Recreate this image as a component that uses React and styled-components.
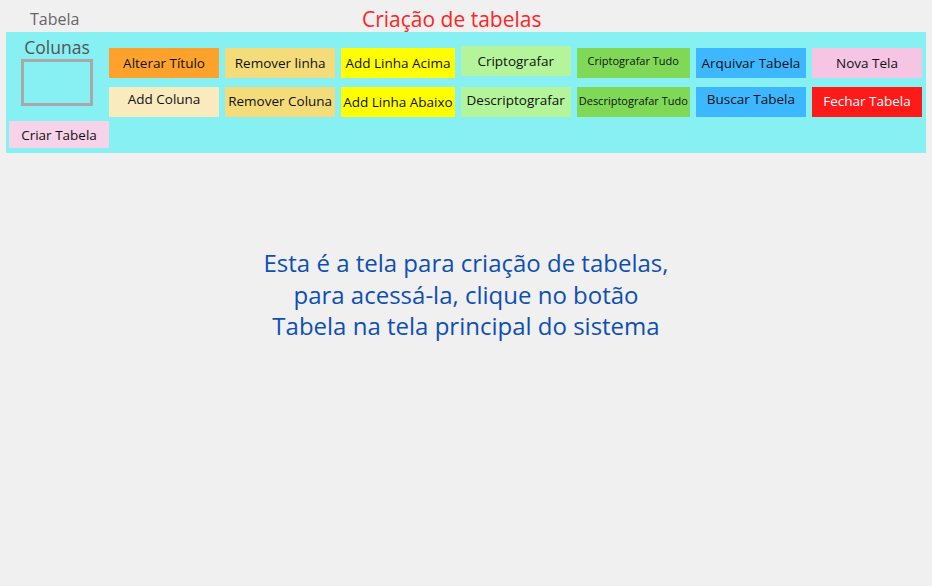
import React from 'react'
import styled, { createGlobalStyle } from 'styled-components'

const GlobalStyle = createGlobalStyle`
  body {
    margin: 0;
    background: #f0f0f0;
    font-family: "Open Sans", "Liberation Sans", sans-serif;
  }
`

const Page = styled.div`
  width: 932px;
  height: 586px;
  background: #f0f0f0;
`

const Header = styled.div`
  display: flex;
  align-items: flex-start;
  height: 32px;
  padding-top: 7px;
  box-sizing: border-box;
`

const Label = styled.span`
  flex: 0 0 362px;
  padding: 1px 0 0 30px;
  box-sizing: border-box;
  font-size: 16px;
  line-height: 22px;
  color: #666666;
`

const Title = styled.h1`
  margin: -2px 0 0;
  font-size: 21px;
  line-height: 28px;
  font-weight: 400;
  color: #ff2424;
`

const Panel = styled.section`
  margin: 0 6px;
  padding: 16px 4px 5px 3px;
  background: #87f0f3;
  display: flex;
  flex-direction: column;
  gap: 4px;
`

const TopRow = styled.div`
  display: flex;
`

const ColumnsBox = styled.div`
  width: 100px;
  padding-right: 4px;
  box-sizing: border-box;
  display: flex;
  flex-direction: column;
  align-items: center;
  margin-top: -11px;
`

const ColumnsLabel = styled.span`
  font-size: 17.5px;
  line-height: 20px;
  color: #555555;
`

const ColumnsInput = styled.div`
  width: 72px;
  height: 47px;
  margin-top: 2px;
  border: 3px solid #a8a8a8;
  box-sizing: border-box;
`

const ButtonGrid = styled.div`
  flex: 1;
  display: grid;
  grid-template-columns: repeat(7, 1fr);
  grid-auto-rows: 30px;
  column-gap: 6px;
  row-gap: 9px;
`

const Button = styled.button`
  border: none;
  margin: 0;
  margin-top: ${p => (p.$up ? `-${p.$up}px` : '0')};
  height: 30px;
  padding: 0 2px ${p => p.$lift || 0}px;
  background: ${p => p.$bg};
  color: ${p => p.$color || '#111111'};
  font-family: "Open Sans", "Liberation Sans", sans-serif;
  font-size: ${p => p.$size || 13.5}px;
  white-space: nowrap;
  display: flex;
  align-items: center;
  justify-content: center;
  cursor: pointer;
`

const CreateButton = styled(Button)`
  width: 100px;
  height: 27px;
`

const Message = styled.p`
  margin: 94px 0 0;
  text-align: center;
  font-size: 24px;
  line-height: 31.5px;
  color: #0f4fb3;
`

const buttons = [
  { label: 'Alterar Título', bg: '#ffa22b' },
  { label: 'Remover linha', bg: '#f5dc7b' },
  { label: 'Add Linha Acima', bg: '#ffff00' },
  { label: 'Criptografar', bg: '#b4f59b', up: 2 },
  { label: 'Criptografar Tudo', bg: '#7fd957', size: 11, lift: 6 },
  { label: 'Arquivar Tabela', bg: '#3db7ff' },
  { label: 'Nova Tela', bg: '#f6c5e4' },
  { label: 'Add Coluna', bg: '#f9ebbe', lift: 6 },
  { label: 'Remover Coluna', bg: '#f5dc7b', lift: 2 },
  { label: 'Add Linha Abaixo', bg: '#ffff00' },
  { label: 'Descriptografar', bg: '#b4f59b', lift: 5 },
  { label: 'Descriptografar Tudo', bg: '#7fd957', size: 11, lift: 3 },
  { label: 'Buscar Tabela', bg: '#3db7ff', lift: 6 },
  { label: 'Fechar Tabela', bg: '#ff1a1a', color: '#ffffff', lift: 2 },
]

const App = () => {
  return (
    <Page>
      <GlobalStyle />
      <Header>
        <Label>Tabela</Label>
        <Title>Criação de tabelas</Title>
      </Header>
      <Panel>
        <TopRow>
          <ColumnsBox>
            <ColumnsLabel>Colunas</ColumnsLabel>
            <ColumnsInput />
          </ColumnsBox>
          <ButtonGrid>
            {buttons.map(b => (
              <Button
                key={b.label}
                $bg={b.bg}
                $color={b.color}
                $size={b.size}
                $lift={b.lift}
                $up={b.up}
              >
                {b.label}
              </Button>
            ))}
          </ButtonGrid>
        </TopRow>
        <CreateButton $bg="#f6d3e9">Criar Tabela</CreateButton>
      </Panel>
      <Message>
        Esta é a tela para criação de tabelas,
        <br />
        para acessá-la, clique no botão
        <br />
        Tabela na tela principal do sistema
      </Message>
    </Page>
  )
}

export default App
